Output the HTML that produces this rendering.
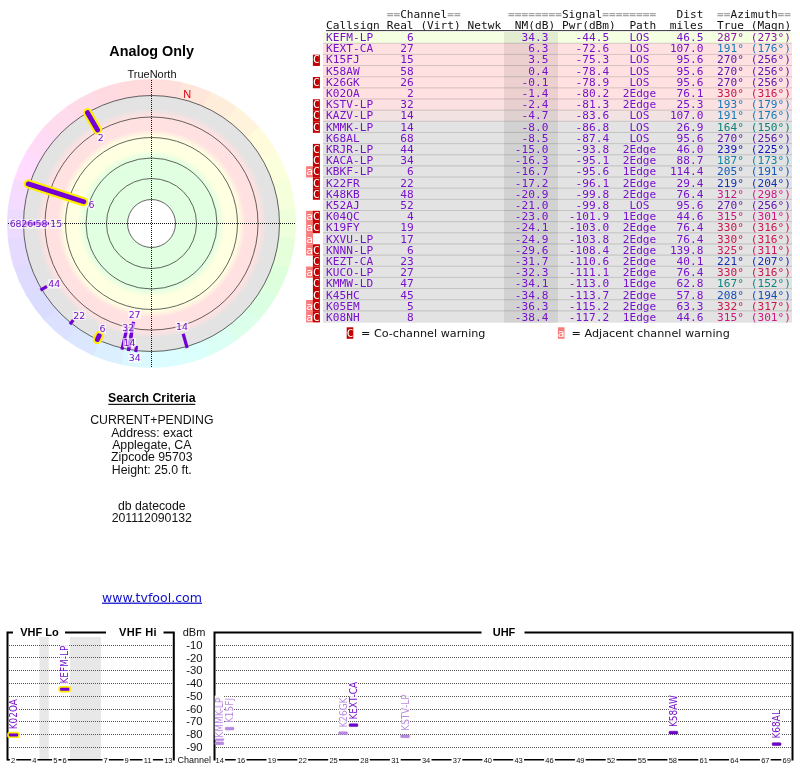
<!DOCTYPE html>
<html lang="en"><head><meta charset="utf-8"><title>TV Fool - Analog Only</title>
<style>
html,body{margin:0;padding:0;background:#fff;}
body{width:800px;height:768px;overflow:hidden;}
svg{display:block;will-change:transform;}
.ar{font-family:"Liberation Sans",Arial,sans-serif;}
.dv{font-family:"DejaVu Sans",Verdana,"Liberation Sans",sans-serif;}
.mo{font-family:"DejaVu Sans Mono","Liberation Mono",monospace;font-size:11.15px;letter-spacing:0.03px;}
</style></head><body>
<svg width="800" height="768" viewBox="0 0 800 768">
<rect width="800" height="768" fill="#fff"/>

<defs><radialGradient id="bands" gradientUnits="userSpaceOnUse" cx="151.5" cy="223.5" r="128.0">
<stop offset="0.0000" stop-color="#fff"/>
<stop offset="0.1867" stop-color="#fff"/>
<stop offset="0.1875" stop-color="#e1ffe1"/>
<stop offset="0.5156" stop-color="#e1ffe1"/>
<stop offset="0.5742" stop-color="#ffffe1"/>
<stop offset="0.6797" stop-color="#ffffe1"/>
<stop offset="0.7344" stop-color="#ffe1e1"/>
<stop offset="0.8438" stop-color="#ffe1e1"/>
<stop offset="0.8984" stop-color="#e3e3e3"/>
<stop offset="1.0000" stop-color="#e3e3e3"/>
</radialGradient></defs>

<g>
<path d="M151.50 223.50 L151.50 79.00 A144.50 144.50 0 0 1 182.28 82.32 Z" fill="#ffdfdb"/>
<path d="M151.50 223.50 L181.54 82.16 A144.50 144.50 0 0 1 210.96 91.80 Z" fill="#ffe6db"/>
<path d="M151.50 223.50 L210.27 91.49 A144.50 144.50 0 0 1 237.05 107.04 Z" fill="#ffeddb"/>
<path d="M151.50 223.50 L236.43 106.60 A144.50 144.50 0 0 1 259.39 127.37 Z" fill="#fff4db"/>
<path d="M151.50 223.50 L258.88 126.81 A144.50 144.50 0 0 1 277.02 151.91 Z" fill="#fffbdb"/>
<path d="M151.50 223.50 L276.64 151.25 A144.50 144.50 0 0 1 289.16 179.57 Z" fill="#fcffdb"/>
<path d="M151.50 223.50 L288.93 178.85 A144.50 144.50 0 0 1 295.29 209.15 Z" fill="#f5ffdb"/>
<path d="M151.50 223.50 L295.21 208.40 A144.50 144.50 0 0 1 295.13 239.36 Z" fill="#eeffdb"/>
<path d="M151.50 223.50 L295.21 238.60 A144.50 144.50 0 0 1 288.69 268.87 Z" fill="#e6ffdb"/>
<path d="M151.50 223.50 L288.93 268.15 A144.50 144.50 0 0 1 276.26 296.40 Z" fill="#ddffdb"/>
<path d="M151.50 223.50 L276.64 295.75 A144.50 144.50 0 0 1 258.38 320.75 Z" fill="#dbffe3"/>
<path d="M151.50 223.50 L258.88 320.19 A144.50 144.50 0 0 1 235.82 340.85 Z" fill="#dbffeb"/>
<path d="M151.50 223.50 L236.43 340.40 A144.50 144.50 0 0 1 209.58 355.81 Z" fill="#dbfff4"/>
<path d="M151.50 223.50 L210.27 355.51 A144.50 144.50 0 0 1 180.80 365.00 Z" fill="#dbfffb"/>
<path d="M151.50 223.50 L181.54 364.84 A144.50 144.50 0 0 1 150.74 368.00 Z" fill="#dbfdff"/>
<path d="M151.50 223.50 L151.50 368.00 A144.50 144.50 0 0 1 120.72 364.68 Z" fill="#dbf8ff"/>
<path d="M151.50 223.50 L121.46 364.84 A144.50 144.50 0 0 1 92.04 355.20 Z" fill="#dbefff"/>
<path d="M151.50 223.50 L92.73 355.51 A144.50 144.50 0 0 1 65.95 339.96 Z" fill="#dbe7ff"/>
<path d="M151.50 223.50 L66.57 340.40 A144.50 144.50 0 0 1 43.61 319.63 Z" fill="#dbe1ff"/>
<path d="M151.50 223.50 L44.12 320.19 A144.50 144.50 0 0 1 25.98 295.09 Z" fill="#dbddff"/>
<path d="M151.50 223.50 L26.36 295.75 A144.50 144.50 0 0 1 13.84 267.43 Z" fill="#dfdbff"/>
<path d="M151.50 223.50 L14.07 268.15 A144.50 144.50 0 0 1 7.71 237.85 Z" fill="#e6dbff"/>
<path d="M151.50 223.50 L7.79 238.60 A144.50 144.50 0 0 1 7.87 207.64 Z" fill="#eddbff"/>
<path d="M151.50 223.50 L7.79 208.40 A144.50 144.50 0 0 1 14.31 178.13 Z" fill="#f5dbff"/>
<path d="M151.50 223.50 L14.07 178.85 A144.50 144.50 0 0 1 26.74 150.60 Z" fill="#fedbff"/>
<path d="M151.50 223.50 L26.36 151.25 A144.50 144.50 0 0 1 44.62 126.25 Z" fill="#ffdbf6"/>
<path d="M151.50 223.50 L44.12 126.81 A144.50 144.50 0 0 1 67.18 106.15 Z" fill="#ffdbee"/>
<path d="M151.50 223.50 L66.57 106.60 A144.50 144.50 0 0 1 93.42 91.19 Z" fill="#ffdbe7"/>
<path d="M151.50 223.50 L92.73 91.49 A144.50 144.50 0 0 1 122.20 82.00 Z" fill="#ffdbe1"/>
<path d="M151.50 223.50 L121.46 82.16 A144.50 144.50 0 0 1 152.26 79.00 Z" fill="#ffdbdd"/>
</g>

<circle cx="151.5" cy="223.5" r="128.0" fill="url(#bands)"/>

<circle cx="151.5" cy="223.5" r="24" fill="none" stroke="#333" stroke-width="0.75"/>
<circle cx="151.5" cy="223.5" r="45" fill="none" stroke="#333" stroke-width="0.75"/>
<circle cx="151.5" cy="223.5" r="65.5" fill="none" stroke="#333" stroke-width="0.75"/>
<circle cx="151.5" cy="223.5" r="86" fill="none" stroke="#333" stroke-width="0.75"/>
<circle cx="151.5" cy="223.5" r="106.5" fill="none" stroke="#333" stroke-width="0.75"/>
<circle cx="151.5" cy="223.5" r="128" fill="none" stroke="#333" stroke-width="0.75"/>


<path d="M8 223.5 H296 M151.5 80 V368" stroke="#111" stroke-width="1" stroke-dasharray="1 1" fill="none"/>

<g fill="none">
<path d="M28.20 183.91 L83.82 201.77" stroke="#ffee00" stroke-width="9.2" stroke-linecap="round"/>
<path d="M28.20 183.91 L83.82 201.77" stroke="#7200d6" stroke-width="4.9" stroke-linecap="round"/>
<path d="M128.35 350.91 L133.62 321.88" stroke="#7200d6" stroke-width="3.2"/>
<path d="M22.00 223.50 L48.61 223.50" stroke="#7200d6" stroke-width="3.2"/>
<path d="M22.00 223.50 L45.41 223.50" stroke="#7200d6" stroke-width="3.2"/>
<path d="M22.00 223.50 L44.90 223.50" stroke="#7200d6" stroke-width="3.2"/>
<path d="M87.50 112.65 L97.53 130.02" stroke="#ffee00" stroke-width="9.2" stroke-linecap="round"/>
<path d="M87.50 112.65 L97.53 130.02" stroke="#7200d6" stroke-width="4.9" stroke-linecap="round"/>
<path d="M121.93 349.58 L126.61 329.60" stroke="#7200d6" stroke-width="3.2"/>
<path d="M128.35 350.91 L131.59 333.06" stroke="#7200d6" stroke-width="3.2"/>
<path d="M187.20 347.98 L183.13 333.81" stroke="#7200d6" stroke-width="3.2"/>
<path d="M22.00 223.50 L36.22 223.50" stroke="#7200d6" stroke-width="3.2"/>
<path d="M40.50 290.20 L46.94 286.33" stroke="#7200d6" stroke-width="3.2"/>
<path d="M135.72 352.03 L136.47 345.91" stroke="#7200d6" stroke-width="3.2"/>
<path d="M97.40 339.51 L99.20 335.65" stroke="#ffee00" stroke-width="9.2" stroke-linecap="round"/>
<path d="M97.40 339.51 L99.20 335.65" stroke="#7200d6" stroke-width="4.9" stroke-linecap="round"/>
<path d="M70.00 324.14 L73.30 320.07" stroke="#7200d6" stroke-width="3.2"/>
</g>

<g class="dv" font-size="9.4" text-anchor="middle" fill="#7711cc">
<rect x="97.4" y="132.8" width="6.8" height="9.4" fill="#fff" fill-opacity="0.62"/>
<rect x="88.0" y="200.2" width="6.8" height="9.4" fill="#fff" fill-opacity="0.62"/>
<rect x="49.7" y="219.3" width="13.0" height="9.4" fill="#fff" fill-opacity="0.62"/>
<rect x="35.0" y="219.3" width="13.0" height="9.4" fill="#fff" fill-opacity="0.62"/>
<rect x="20.7" y="219.3" width="13.0" height="9.4" fill="#fff" fill-opacity="0.62"/>
<rect x="9.1" y="219.3" width="13.0" height="9.4" fill="#fff" fill-opacity="0.62"/>
<rect x="47.8" y="279.1" width="13.0" height="9.4" fill="#fff" fill-opacity="0.62"/>
<rect x="72.8" y="310.7" width="13.0" height="9.4" fill="#fff" fill-opacity="0.62"/>
<rect x="99.1" y="324.1" width="6.8" height="9.4" fill="#fff" fill-opacity="0.62"/>
<rect x="128.1" y="309.7" width="13.0" height="9.4" fill="#fff" fill-opacity="0.62"/>
<rect x="121.7" y="323.3" width="13.0" height="9.4" fill="#fff" fill-opacity="0.62"/>
<rect x="123.0" y="337.9" width="13.0" height="9.4" fill="#fff" fill-opacity="0.62"/>
<rect x="128.3" y="353.3" width="13.0" height="9.4" fill="#fff" fill-opacity="0.62"/>
<rect x="175.5" y="321.7" width="13.0" height="9.4" fill="#fff" fill-opacity="0.62"/>
<text x="100.8" y="140.9">2</text>
<text x="91.4" y="208.3">6</text>
<text x="56.2" y="227.4">15</text>
<text x="41.5" y="227.4">58</text>
<text x="27.2" y="227.4">26</text>
<text x="15.6" y="227.4">68</text>
<text x="54.3" y="287.2">44</text>
<text x="79.3" y="318.8">22</text>
<text x="102.5" y="332.2">6</text>
<text x="134.6" y="317.8">27</text>
<text x="128.2" y="331.4">32</text>
<text x="129.5" y="346.1">14</text>
<text x="134.8" y="361.4">34</text>
<text x="182" y="329.8">14</text>
</g>

<text class="ar" x="151.7" y="55.8" font-size="14.4" font-weight="bold" text-anchor="middle" fill="#000">Analog Only</text>

<text class="ar" x="152" y="77.7" font-size="11" text-anchor="middle" fill="#111">TrueNorth</text>

<text class="ar" x="187.3" y="97.5" font-size="11" text-anchor="middle" fill="#dd0011">N</text>

<g class="ar" text-anchor="middle" fill="#111" font-size="12.3">
<text x="151.8" y="402" font-weight="bold" fill="#000">Search Criteria</text><rect x="108.3" y="403.8" width="87" height="1.1" fill="#000"/>
<text x="151.8" y="423.8">CURRENT+PENDING</text>
<text x="151.8" y="436.9">Address: exact</text>
<text x="151.8" y="448.8">Applegate, CA</text>
<text x="151.8" y="460.7">Zipcode 95703</text>
<text x="151.8" y="473.6">Height: 25.0 ft.</text>
<text x="151.8" y="509.7">db datecode</text>
<text x="151.8" y="522.2">201112090132</text>
</g>

<text class="dv" x="152" y="601.6" font-size="12.55" text-anchor="middle" fill="#1010cc" text-decoration="underline">www.tvfool.com</text>

<g class="mo" transform="scale(1 0.865)">
<text y="20.58" fill="#a4a4a4" font-weight="bold" xml:space="preserve"><tspan x="386.68">==</tspan><tspan fill="#111" font-weight="normal">Channel</tspan>==</text>
<text y="20.58" fill="#a4a4a4" font-weight="bold" xml:space="preserve"><tspan x="508.03">========</tspan><tspan fill="#111" font-weight="normal">Signal</tspan>========</text>
<text y="20.58" fill="#111" x="676.58">Dist</text>
<text y="20.58" fill="#a4a4a4" font-weight="bold" xml:space="preserve"><tspan x="717.04">==</tspan><tspan fill="#111" font-weight="normal">Azimuth</tspan>==</text>
<text y="33.53" fill="#111" x="326.00">Callsign</text>
<text y="33.53" fill="#111" x="386.68">Real</text>
<text y="33.53" fill="#111" x="420.39">(Virt)</text>
<text y="33.53" fill="#111" x="467.58">Netwk</text>
<text y="33.53" fill="#111" x="514.78">NM(dB)</text>
<text y="33.53" fill="#111" x="561.97">Pwr(dBm)</text>
<text y="33.53" fill="#111" x="629.39">Path</text>
<text y="33.53" fill="#111" x="669.84">miles</text>
<text y="33.53" fill="#111" x="717.04">True</text>
<text y="33.53" fill="#111" x="750.75">(Magn)</text>
</g>

<rect x="326" y="30.1" width="464.5" height="1" fill="#333"/>

<g>
<rect x="323" y="32.10" width="469" height="11.20" fill="#f5ffe1"/>
<rect x="323" y="43.25" width="469" height="11.20" fill="#ffe1e1"/>
<rect x="323" y="54.40" width="469" height="11.20" fill="#ffe1e1"/>
<rect x="323" y="65.55" width="469" height="11.20" fill="#ffe1e1"/>
<rect x="323" y="76.70" width="469" height="11.20" fill="#ffe1e1"/>
<rect x="323" y="87.85" width="469" height="11.20" fill="#ffe1e1"/>
<rect x="323" y="99.00" width="469" height="11.20" fill="#fbe1e1"/>
<rect x="323" y="110.15" width="469" height="11.20" fill="#f2e2e2"/>
<rect x="323" y="121.30" width="469" height="11.20" fill="#e4e3e3"/>
<rect x="323" y="132.45" width="469" height="11.20" fill="#e3e3e3"/>
<rect x="323" y="143.60" width="469" height="11.20" fill="#e3e3e3"/>
<rect x="323" y="154.75" width="469" height="11.20" fill="#e3e3e3"/>
<rect x="323" y="165.90" width="469" height="11.20" fill="#e3e3e3"/>
<rect x="323" y="177.05" width="469" height="11.20" fill="#e3e3e3"/>
<rect x="323" y="188.20" width="469" height="11.20" fill="#e3e3e3"/>
<rect x="323" y="199.35" width="469" height="11.20" fill="#e3e3e3"/>
<rect x="323" y="210.50" width="469" height="11.20" fill="#e3e3e3"/>
<rect x="323" y="221.65" width="469" height="11.20" fill="#e3e3e3"/>
<rect x="323" y="232.80" width="469" height="11.20" fill="#e3e3e3"/>
<rect x="323" y="243.95" width="469" height="11.20" fill="#e3e3e3"/>
<rect x="323" y="255.10" width="469" height="11.20" fill="#e3e3e3"/>
<rect x="323" y="266.25" width="469" height="11.20" fill="#e3e3e3"/>
<rect x="323" y="277.40" width="469" height="11.20" fill="#e3e3e3"/>
<rect x="323" y="288.55" width="469" height="11.20" fill="#e3e3e3"/>
<rect x="323" y="299.70" width="469" height="11.20" fill="#e3e3e3"/>
<rect x="323" y="310.85" width="469" height="11.85" fill="#e3e3e3"/>
<rect x="504" y="32.10" width="54" height="290.60" fill="#000" fill-opacity="0.075"/>
<rect x="323" y="42.75" width="469" height="1" fill="#000" fill-opacity="0.16"/>
<rect x="323" y="53.90" width="469" height="1" fill="#000" fill-opacity="0.16"/>
<rect x="323" y="65.05" width="469" height="1" fill="#000" fill-opacity="0.16"/>
<rect x="323" y="76.20" width="469" height="1" fill="#000" fill-opacity="0.16"/>
<rect x="323" y="87.35" width="469" height="1" fill="#000" fill-opacity="0.16"/>
<rect x="323" y="98.50" width="469" height="1" fill="#000" fill-opacity="0.16"/>
<rect x="323" y="109.65" width="469" height="1" fill="#000" fill-opacity="0.16"/>
<rect x="323" y="120.80" width="469" height="1" fill="#000" fill-opacity="0.16"/>
<rect x="323" y="131.95" width="469" height="1" fill="#000" fill-opacity="0.16"/>
<rect x="323" y="143.10" width="469" height="1" fill="#000" fill-opacity="0.16"/>
<rect x="323" y="154.25" width="469" height="1" fill="#000" fill-opacity="0.16"/>
<rect x="323" y="165.40" width="469" height="1" fill="#000" fill-opacity="0.16"/>
<rect x="323" y="176.55" width="469" height="1" fill="#000" fill-opacity="0.16"/>
<rect x="323" y="187.70" width="469" height="1" fill="#000" fill-opacity="0.16"/>
<rect x="323" y="198.85" width="469" height="1" fill="#000" fill-opacity="0.16"/>
<rect x="323" y="210.00" width="469" height="1" fill="#000" fill-opacity="0.16"/>
<rect x="323" y="221.15" width="469" height="1" fill="#000" fill-opacity="0.16"/>
<rect x="323" y="232.30" width="469" height="1" fill="#000" fill-opacity="0.16"/>
<rect x="323" y="243.45" width="469" height="1" fill="#000" fill-opacity="0.16"/>
<rect x="323" y="254.60" width="469" height="1" fill="#000" fill-opacity="0.16"/>
<rect x="323" y="265.75" width="469" height="1" fill="#000" fill-opacity="0.16"/>
<rect x="323" y="276.90" width="469" height="1" fill="#000" fill-opacity="0.16"/>
<rect x="323" y="288.05" width="469" height="1" fill="#000" fill-opacity="0.16"/>
<rect x="323" y="299.20" width="469" height="1" fill="#000" fill-opacity="0.16"/>
<rect x="323" y="310.35" width="469" height="1" fill="#000" fill-opacity="0.16"/>
</g>

<g class="mo" fill="#7711cc" transform="scale(1 0.865)">
<text y="47.34"><tspan x="326.00">KEFM-LP</tspan></text>
<text y="47.34" text-anchor="end" x="413.65">6</text>
<text y="47.34" text-anchor="end" x="548.49">34.3</text>
<text y="47.34" text-anchor="end" x="609.16">-44.5</text>
<text y="47.34" text-anchor="middle" x="639.50">LOS</text>
<text y="47.34" text-anchor="end" x="703.55">46.5</text>
<text y="47.34" fill="#8f13ae" xml:space="preserve" x="717.04">287° (273°)</text>
<text y="60.29"><tspan x="326.00">KEXT-CA</tspan></text>
<text y="60.29" text-anchor="end" x="413.65">27</text>
<text y="60.29" text-anchor="end" x="548.49">6.3</text>
<text y="60.29" text-anchor="end" x="609.16">-72.6</text>
<text y="60.29" text-anchor="middle" x="639.50">LOS</text>
<text y="60.29" text-anchor="end" x="703.55">107.0</text>
<text y="60.29" fill="#147cb8" xml:space="preserve" x="717.04">191° (176°)</text>
<text y="73.24"><tspan x="326.00">K15FJ</tspan></text>
<text y="73.24" text-anchor="end" x="413.65">15</text>
<text y="73.24" text-anchor="end" x="548.49">3.5</text>
<text y="73.24" text-anchor="end" x="609.16">-75.3</text>
<text y="73.24" text-anchor="middle" x="639.50">LOS</text>
<text y="73.24" text-anchor="end" x="703.55">95.6</text>
<text y="73.24" fill="#5e13ae" xml:space="preserve" x="717.04">270° (256°)</text>
<text y="86.18"><tspan x="326.00">K58AW</tspan></text>
<text y="86.18" text-anchor="end" x="413.65">58</text>
<text y="86.18" text-anchor="end" x="548.49">0.4</text>
<text y="86.18" text-anchor="end" x="609.16">-78.4</text>
<text y="86.18" text-anchor="middle" x="639.50">LOS</text>
<text y="86.18" text-anchor="end" x="703.55">95.6</text>
<text y="86.18" fill="#5e13ae" xml:space="preserve" x="717.04">270° (256°)</text>
<text y="99.13"><tspan x="326.00">K26GK</tspan></text>
<text y="99.13" text-anchor="end" x="413.65">26</text>
<text y="99.13" text-anchor="end" x="548.49">-0.1</text>
<text y="99.13" text-anchor="end" x="609.16">-78.9</text>
<text y="99.13" text-anchor="middle" x="639.50">LOS</text>
<text y="99.13" text-anchor="end" x="703.55">95.6</text>
<text y="99.13" fill="#5e13ae" xml:space="preserve" x="717.04">270° (256°)</text>
<text y="112.08"><tspan x="326.00">K02OA</tspan></text>
<text y="112.08" text-anchor="end" x="413.65">2</text>
<text y="112.08" text-anchor="end" x="548.49">-1.4</text>
<text y="112.08" text-anchor="end" x="609.16">-80.2</text>
<text y="112.08" text-anchor="middle" x="639.50">2Edge</text>
<text y="112.08" text-anchor="end" x="703.55">76.1</text>
<text y="112.08" fill="#ca164f" xml:space="preserve" x="717.04">330° (316°)</text>
<text y="125.03"><tspan x="326.00">KSTV-LP</tspan></text>
<text y="125.03" text-anchor="end" x="413.65">32</text>
<text y="125.03" text-anchor="end" x="548.49">-2.4</text>
<text y="125.03" text-anchor="end" x="609.16">-81.3</text>
<text y="125.03" text-anchor="middle" x="639.50">2Edge</text>
<text y="125.03" text-anchor="end" x="703.55">25.3</text>
<text y="125.03" fill="#1579bc" xml:space="preserve" x="717.04">193° (179°)</text>
<text y="137.98"><tspan x="326.00">KAZV-LP</tspan></text>
<text y="137.98" text-anchor="end" x="413.65">14</text>
<text y="137.98" text-anchor="end" x="548.49">-4.7</text>
<text y="137.98" text-anchor="end" x="609.16">-83.6</text>
<text y="137.98" text-anchor="middle" x="639.50">LOS</text>
<text y="137.98" text-anchor="end" x="703.55">107.0</text>
<text y="137.98" fill="#147cb8" xml:space="preserve" x="717.04">191° (176°)</text>
<text y="150.92"><tspan x="326.00">KMMK-LP</tspan></text>
<text y="150.92" text-anchor="end" x="413.65">14</text>
<text y="150.92" text-anchor="end" x="548.49">-8.0</text>
<text y="150.92" text-anchor="end" x="609.16">-86.8</text>
<text y="150.92" text-anchor="middle" x="639.50">LOS</text>
<text y="150.92" text-anchor="end" x="703.55">26.9</text>
<text y="150.92" fill="#0e8179" xml:space="preserve" x="717.04">164° (150°)</text>
<text y="163.87"><tspan x="326.00">K68AL</tspan></text>
<text y="163.87" text-anchor="end" x="413.65">68</text>
<text y="163.87" text-anchor="end" x="548.49">-8.5</text>
<text y="163.87" text-anchor="end" x="609.16">-87.4</text>
<text y="163.87" text-anchor="middle" x="639.50">LOS</text>
<text y="163.87" text-anchor="end" x="703.55">95.6</text>
<text y="163.87" fill="#5e13ae" xml:space="preserve" x="717.04">270° (256°)</text>
<text y="176.82"><tspan x="326.00">KRJR-LP</tspan></text>
<text y="176.82" text-anchor="end" x="413.65">44</text>
<text y="176.82" text-anchor="end" x="548.49">-15.0</text>
<text y="176.82" text-anchor="end" x="609.16">-93.8</text>
<text y="176.82" text-anchor="middle" x="639.50">2Edge</text>
<text y="176.82" text-anchor="end" x="703.55">46.0</text>
<text y="176.82" fill="#1515bc" xml:space="preserve" x="717.04">239° (225°)</text>
<text y="189.77"><tspan x="326.00">KACA-LP</tspan></text>
<text y="189.77" text-anchor="end" x="413.65">34</text>
<text y="189.77" text-anchor="end" x="548.49">-16.3</text>
<text y="189.77" text-anchor="end" x="609.16">-95.1</text>
<text y="189.77" text-anchor="middle" x="639.50">2Edge</text>
<text y="189.77" text-anchor="end" x="703.55">88.7</text>
<text y="189.77" fill="#1285a5" xml:space="preserve" x="717.04">187° (173°)</text>
<text y="202.72"><tspan x="326.00">KBKF-LP</tspan></text>
<text y="202.72" text-anchor="end" x="413.65">6</text>
<text y="202.72" text-anchor="end" x="548.49">-16.7</text>
<text y="202.72" text-anchor="end" x="609.16">-95.6</text>
<text y="202.72" text-anchor="middle" x="639.50">1Edge</text>
<text y="202.72" text-anchor="end" x="703.55">114.4</text>
<text y="202.72" fill="#1558bc" xml:space="preserve" x="717.04">205° (191°)</text>
<text y="215.66"><tspan x="326.00">K22FR</tspan></text>
<text y="215.66" text-anchor="end" x="413.65">22</text>
<text y="215.66" text-anchor="end" x="548.49">-17.2</text>
<text y="215.66" text-anchor="end" x="609.16">-96.1</text>
<text y="215.66" text-anchor="middle" x="639.50">2Edge</text>
<text y="215.66" text-anchor="end" x="703.55">29.4</text>
<text y="215.66" fill="#1431b3" xml:space="preserve" x="717.04">219° (204°)</text>
<text y="228.61"><tspan x="326.00">K48KB</tspan></text>
<text y="228.61" text-anchor="end" x="413.65">48</text>
<text y="228.61" text-anchor="end" x="548.49">-20.9</text>
<text y="228.61" text-anchor="end" x="609.16">-99.8</text>
<text y="228.61" text-anchor="middle" x="639.50">2Edge</text>
<text y="228.61" text-anchor="end" x="703.55">76.4</text>
<text y="228.61" fill="#cf1788" xml:space="preserve" x="717.04">312° (298°)</text>
<text y="241.56"><tspan x="326.00">K52AJ</tspan></text>
<text y="241.56" text-anchor="end" x="413.65">52</text>
<text y="241.56" text-anchor="end" x="548.49">-21.0</text>
<text y="241.56" text-anchor="end" x="609.16">-99.8</text>
<text y="241.56" text-anchor="middle" x="639.50">LOS</text>
<text y="241.56" text-anchor="end" x="703.55">95.6</text>
<text y="241.56" fill="#5e13ae" xml:space="preserve" x="717.04">270° (256°)</text>
<text y="254.51"><tspan x="326.00">K04QC</tspan></text>
<text y="254.51" text-anchor="end" x="413.65">4</text>
<text y="254.51" text-anchor="end" x="548.49">-23.0</text>
<text y="254.51" text-anchor="end" x="609.16">-101.9</text>
<text y="254.51" text-anchor="middle" x="639.50">1Edge</text>
<text y="254.51" text-anchor="end" x="703.55">44.6</text>
<text y="254.51" fill="#ce177f" xml:space="preserve" x="717.04">315° (301°)</text>
<text y="267.46"><tspan x="326.00">K19FY</tspan></text>
<text y="267.46" text-anchor="end" x="413.65">19</text>
<text y="267.46" text-anchor="end" x="548.49">-24.1</text>
<text y="267.46" text-anchor="end" x="609.16">-103.0</text>
<text y="267.46" text-anchor="middle" x="639.50">2Edge</text>
<text y="267.46" text-anchor="end" x="703.55">76.4</text>
<text y="267.46" fill="#ca164f" xml:space="preserve" x="717.04">330° (316°)</text>
<text y="280.40"><tspan x="326.00">KXVU-LP</tspan></text>
<text y="280.40" text-anchor="end" x="413.65">17</text>
<text y="280.40" text-anchor="end" x="548.49">-24.9</text>
<text y="280.40" text-anchor="end" x="609.16">-103.8</text>
<text y="280.40" text-anchor="middle" x="639.50">2Edge</text>
<text y="280.40" text-anchor="end" x="703.55">76.4</text>
<text y="280.40" fill="#ca164f" xml:space="preserve" x="717.04">330° (316°)</text>
<text y="293.35"><tspan x="326.00">KNNN-LP</tspan></text>
<text y="293.35" text-anchor="end" x="413.65">6</text>
<text y="293.35" text-anchor="end" x="548.49">-29.6</text>
<text y="293.35" text-anchor="end" x="609.16">-108.4</text>
<text y="293.35" text-anchor="middle" x="639.50">2Edge</text>
<text y="293.35" text-anchor="end" x="703.55">139.8</text>
<text y="293.35" fill="#cb175f" xml:space="preserve" x="717.04">325° (311°)</text>
<text y="306.30"><tspan x="326.00">KEZT-CA</tspan></text>
<text y="306.30" text-anchor="end" x="413.65">23</text>
<text y="306.30" text-anchor="end" x="548.49">-31.7</text>
<text y="306.30" text-anchor="end" x="609.16">-110.6</text>
<text y="306.30" text-anchor="middle" x="639.50">2Edge</text>
<text y="306.30" text-anchor="end" x="703.55">40.1</text>
<text y="306.30" fill="#142eb4" xml:space="preserve" x="717.04">221° (207°)</text>
<text y="319.25"><tspan x="326.00">KUCO-LP</tspan></text>
<text y="319.25" text-anchor="end" x="413.65">27</text>
<text y="319.25" text-anchor="end" x="548.49">-32.3</text>
<text y="319.25" text-anchor="end" x="609.16">-111.1</text>
<text y="319.25" text-anchor="middle" x="639.50">2Edge</text>
<text y="319.25" text-anchor="end" x="703.55">76.4</text>
<text y="319.25" fill="#ca164f" xml:space="preserve" x="717.04">330° (316°)</text>
<text y="332.20"><tspan x="326.00">KMMW-LD</tspan></text>
<text y="332.20" text-anchor="end" x="413.65">47</text>
<text y="332.20" text-anchor="end" x="548.49">-34.1</text>
<text y="332.20" text-anchor="end" x="609.16">-113.0</text>
<text y="332.20" text-anchor="middle" x="639.50">1Edge</text>
<text y="332.20" text-anchor="end" x="703.55">62.8</text>
<text y="332.20" fill="#0f8582" xml:space="preserve" x="717.04">167° (152°)</text>
<text y="345.14"><tspan x="326.00">K45HC</tspan></text>
<text y="345.14" text-anchor="end" x="413.65">45</text>
<text y="345.14" text-anchor="end" x="548.49">-34.8</text>
<text y="345.14" text-anchor="end" x="609.16">-113.7</text>
<text y="345.14" text-anchor="middle" x="639.50">2Edge</text>
<text y="345.14" text-anchor="end" x="703.55">57.8</text>
<text y="345.14" fill="#154fba" xml:space="preserve" x="717.04">208° (194°)</text>
<text y="358.09"><tspan x="326.00">K05EM</tspan></text>
<text y="358.09" text-anchor="end" x="413.65">5</text>
<text y="358.09" text-anchor="end" x="548.49">-36.3</text>
<text y="358.09" text-anchor="end" x="609.16">-115.2</text>
<text y="358.09" text-anchor="middle" x="639.50">2Edge</text>
<text y="358.09" text-anchor="end" x="703.55">63.3</text>
<text y="358.09" fill="#ca164a" xml:space="preserve" x="717.04">332° (317°)</text>
<text y="371.04"><tspan x="326.00">K08NH</tspan></text>
<text y="371.04" text-anchor="end" x="413.65">8</text>
<text y="371.04" text-anchor="end" x="548.49">-38.4</text>
<text y="371.04" text-anchor="end" x="609.16">-117.2</text>
<text y="371.04" text-anchor="middle" x="639.50">1Edge</text>
<text y="371.04" text-anchor="end" x="703.55">44.6</text>
<text y="371.04" fill="#ce177f" xml:space="preserve" x="717.04">315° (301°)</text>
</g>

<g>
<rect x="312.9" y="54.70" width="7" height="11.25" fill="#c40000"/>
<rect x="312.9" y="77.00" width="7" height="11.25" fill="#c40000"/>
<rect x="312.9" y="99.30" width="7" height="11.25" fill="#c40000"/>
<rect x="312.9" y="110.45" width="7" height="11.25" fill="#c40000"/>
<rect x="312.9" y="121.60" width="7" height="11.25" fill="#c40000"/>
<rect x="312.9" y="143.90" width="7" height="11.25" fill="#c40000"/>
<rect x="312.9" y="155.05" width="7" height="11.25" fill="#c40000"/>
<rect x="306.1" y="166.20" width="6.9" height="11.25" fill="#f97c7c"/>
<rect x="312.9" y="166.20" width="7" height="11.25" fill="#c40000"/>
<rect x="312.9" y="177.35" width="7" height="11.25" fill="#c40000"/>
<rect x="312.9" y="188.50" width="7" height="11.25" fill="#c40000"/>
<rect x="306.1" y="210.80" width="6.9" height="11.25" fill="#f97c7c"/>
<rect x="312.9" y="210.80" width="7" height="11.25" fill="#c40000"/>
<rect x="306.1" y="221.95" width="6.9" height="11.25" fill="#f97c7c"/>
<rect x="312.9" y="221.95" width="7" height="11.25" fill="#c40000"/>
<rect x="306.1" y="233.10" width="6.9" height="11.25" fill="#f97c7c"/>
<rect x="306.1" y="244.25" width="6.9" height="11.25" fill="#f97c7c"/>
<rect x="312.9" y="244.25" width="7" height="11.25" fill="#c40000"/>
<rect x="312.9" y="255.40" width="7" height="11.25" fill="#c40000"/>
<rect x="306.1" y="266.55" width="6.9" height="11.25" fill="#f97c7c"/>
<rect x="312.9" y="266.55" width="7" height="11.25" fill="#c40000"/>
<rect x="312.9" y="277.70" width="7" height="11.25" fill="#c40000"/>
<rect x="312.9" y="288.85" width="7" height="11.25" fill="#c40000"/>
<rect x="306.1" y="300.00" width="6.9" height="11.25" fill="#f97c7c"/>
<rect x="312.9" y="300.00" width="7" height="11.25" fill="#c40000"/>
<rect x="306.1" y="311.15" width="6.9" height="11.25" fill="#f97c7c"/>
<rect x="312.9" y="311.15" width="7" height="11.25" fill="#c40000"/>
<rect x="346.7" y="327.3" width="6.6" height="11.5" fill="#c40000"/>
<rect x="557.9" y="327.3" width="6.6" height="11.5" fill="#f97c7c"/>
</g>
<g class="mo" fill="#fff" text-anchor="middle" transform="scale(1 0.865)">
<text x="316.5" y="73.24">C</text>
<text x="316.5" y="99.13">C</text>
<text x="316.5" y="125.03">C</text>
<text x="316.5" y="137.98">C</text>
<text x="316.5" y="150.92">C</text>
<text x="316.5" y="176.82">C</text>
<text x="316.5" y="189.77">C</text>
<text x="309.6" y="202.72">a</text>
<text x="316.5" y="202.72">C</text>
<text x="316.5" y="215.66">C</text>
<text x="316.5" y="228.61">C</text>
<text x="309.6" y="254.51">a</text>
<text x="316.5" y="254.51">C</text>
<text x="309.6" y="267.46">a</text>
<text x="316.5" y="267.46">C</text>
<text x="309.6" y="280.40">a</text>
<text x="309.6" y="293.35">a</text>
<text x="316.5" y="293.35">C</text>
<text x="316.5" y="306.30">C</text>
<text x="309.6" y="319.25">a</text>
<text x="316.5" y="319.25">C</text>
<text x="316.5" y="332.20">C</text>
<text x="316.5" y="345.14">C</text>
<text x="309.6" y="358.09">a</text>
<text x="316.5" y="358.09">C</text>
<text x="309.6" y="371.04">a</text>
<text x="316.5" y="371.04">C</text>
<text x="350" y="389.25">C</text><text x="561.2" y="389.25">a</text>
</g>

<text class="dv" x="361" y="336.6" font-size="11.2" fill="#111">= Co-channel warning</text>

<text class="dv" x="571.6" y="336.6" font-size="11.2" fill="#111">= Adjacent channel warning</text>

<rect x="39.4" y="637" width="9.4" height="123.0" fill="#e8e8e8"/><rect x="70" y="637" width="31" height="123.0" fill="#e8e8e8"/>

<g stroke="#555" stroke-width="1" stroke-dasharray="1 1" fill="none">
<path d="M9 645.5 H173 M216 645.5 H792"/>
<path d="M9 657.5 H173 M216 657.5 H792"/>
<path d="M9 670.5 H173 M216 670.5 H792"/>
<path d="M9 683.5 H173 M216 683.5 H792"/>
<path d="M9 696.5 H173 M216 696.5 H792"/>
<path d="M9 709.5 H173 M216 709.5 H792"/>
<path d="M9 721.5 H173 M216 721.5 H792"/>
<path d="M9 734.5 H173 M216 734.5 H792"/>
<path d="M9 747.5 H173 M216 747.5 H792"/>
</g>

<g stroke="#000" stroke-width="2" fill="none">
<path d="M13 632.5 H7.5 V760.5"/><path d="M65 632.5 H106"/><path d="M163.5 632.5 H173.8 V760.5"/>
<path d="M214.5 760.5 V632.5 H481.5"/><path d="M524.5 632.5 H792.5 V760.5"/>
</g>

<g class="ar" font-weight="bold" font-size="11" fill="#000" text-anchor="middle">
<text x="39.5" y="635.8">VHF Lo</text><text x="138" y="635.8" letter-spacing="0.3">VHF Hi</text><text x="504" y="635.8">UHF</text></g>

<g class="ar" font-size="11.3" fill="#111">
<text x="194" y="636" text-anchor="middle" font-size="11">dBm</text>
<text x="202.6" y="648.7" text-anchor="end">-10</text>
<text x="202.6" y="661.5" text-anchor="end">-20</text>
<text x="202.6" y="674.3" text-anchor="end">-30</text>
<text x="202.6" y="687.1" text-anchor="end">-40</text>
<text x="202.6" y="699.9" text-anchor="end">-50</text>
<text x="202.6" y="712.6" text-anchor="end">-60</text>
<text x="202.6" y="725.4" text-anchor="end">-70</text>
<text x="202.6" y="738.2" text-anchor="end">-80</text>
<text x="202.6" y="751.0" text-anchor="end">-90</text>
<text x="194.2" y="763.2" text-anchor="middle" font-size="9">Channel</text>
</g>

<g class="ar" font-size="7.5" fill="#111" text-anchor="middle">
<text x="13.1" y="762.5">2</text>
<text x="34.3" y="762.5">4</text>
<text x="55.3" y="762.5">5</text>
<text x="64.6" y="762.5">6</text>
<text x="105.7" y="762.5">7</text>
<text x="126.7" y="762.5">9</text>
<text x="147.7" y="762.5">11</text>
<text x="168.3" y="762.5">13</text>
<text x="219.7" y="762.5">14</text>
<text x="241.1" y="762.5">16</text>
<text x="271.9" y="762.5">19</text>
<text x="302.7" y="762.5">22</text>
<text x="333.6" y="762.5">25</text>
<text x="364.4" y="762.5">28</text>
<text x="395.3" y="762.5">31</text>
<text x="426.1" y="762.5">34</text>
<text x="456.9" y="762.5">37</text>
<text x="487.8" y="762.5">40</text>
<text x="518.6" y="762.5">43</text>
<text x="549.5" y="762.5">46</text>
<text x="580.3" y="762.5">49</text>
<text x="611.1" y="762.5">52</text>
<text x="642.0" y="762.5">55</text>
<text x="672.8" y="762.5">58</text>
<text x="703.7" y="762.5">61</text>
<text x="734.5" y="762.5">64</text>
<text x="765.3" y="762.5">67</text>
<text x="786.7" y="762.5">69</text>
</g>

<path d="M7.5 759.8 H9.9 M16.3 759.8 H31.1 M37.5 759.8 H52.1 M58.5 759.8 H61.4 M67.8 759.8 H102.5 M108.9 759.8 H123.5 M129.9 759.8 H142.5 M152.9 759.8 H163.1 M225.1 759.8 H235.7 M246.5 759.8 H266.5 M277.3 759.8 H297.3 M308.1 759.8 H328.2 M339.0 759.8 H359.0 M369.8 759.8 H389.9 M400.7 759.8 H420.7 M431.5 759.8 H451.5 M462.3 759.8 H482.4 M493.2 759.8 H513.2 M524.0 759.8 H544.1 M554.9 759.8 H574.9 M585.7 759.8 H605.7 M616.5 759.8 H636.6 M647.4 759.8 H667.4 M678.2 759.8 H698.3 M709.1 759.8 H729.1 M739.9 759.8 H759.9 M770.7 759.8 H781.3" stroke="#000" stroke-width="1.6" fill="none"/>

<g>
<rect x="60.2" y="644.2" width="9" height="40.4" fill="#fff" fill-opacity="0.8"/>
<rect x="58.3" y="686.0" width="12.8" height="6.4" rx="3.2" fill="#ffee00"/>
<rect x="60.1" y="687.7" width="9.2" height="3" rx="0.8" fill="#7200d6"/>
<text class="dv" font-size="9.7" fill="#7711cc" transform="translate(68.2 683.6) rotate(-90) scale(0.925 1)">KEFM-LP</text>
<rect x="349.0" y="680.9" width="9" height="39.6" fill="#fff" fill-opacity="0.8"/>
<rect x="349.1" y="723.8" width="8.8" height="2.8" rx="0.8" fill="#7200d6" stroke="#4a0096" stroke-width="0.5"/>
<text class="dv" font-size="9.7" fill="#7711cc" transform="translate(357.0 719.6) rotate(-90) scale(0.925 1)">KEXT-CA</text>
<rect x="225.1" y="696.9" width="9" height="27.1" fill="#fff" fill-opacity="0.8"/>
<rect x="225.2" y="727.2" width="8.8" height="2.8" rx="0.8" fill="#b98ae0" stroke="#a87cd6" stroke-width="0.5"/>
<text class="dv" font-size="9.7" fill="#b98ae0" transform="translate(233.1 723.0) rotate(-90) scale(0.925 1)">K15FJ</text>
<rect x="668.9" y="694.2" width="9" height="33.8" fill="#fff" fill-opacity="0.8"/>
<rect x="669.0" y="731.2" width="8.8" height="2.8" rx="0.8" fill="#7200d6" stroke="#4a0096" stroke-width="0.5"/>
<text class="dv" font-size="9.7" fill="#7711cc" transform="translate(676.9 727.0) rotate(-90) scale(0.925 1)">K58AW</text>
<rect x="338.6" y="697.9" width="9" height="30.7" fill="#fff" fill-opacity="0.8"/>
<rect x="338.7" y="731.8" width="8.8" height="2.8" rx="0.8" fill="#b98ae0" stroke="#a87cd6" stroke-width="0.5"/>
<text class="dv" font-size="9.7" fill="#b98ae0" transform="translate(346.6 727.6) rotate(-90) scale(0.925 1)">K26GK</text>
<rect x="9.0" y="699.6" width="9" height="30.7" fill="#fff" fill-opacity="0.8"/>
<rect x="7.1" y="731.7" width="12.8" height="6.4" rx="3.2" fill="#ffee00"/>
<rect x="8.9" y="733.4" width="9.2" height="3" rx="0.8" fill="#7200d6"/>
<text class="dv" font-size="9.7" fill="#7711cc" transform="translate(17.0 729.3) rotate(-90) scale(0.925 1)">K02OA</text>
<rect x="400.6" y="692.8" width="9" height="38.9" fill="#fff" fill-opacity="0.8"/>
<rect x="400.7" y="734.9" width="8.8" height="2.8" rx="0.8" fill="#b98ae0" stroke="#a87cd6" stroke-width="0.5"/>
<text class="dv" font-size="9.7" fill="#b98ae0" transform="translate(408.6 730.7) rotate(-90) scale(0.925 1)">KSTV-LP</text>
<rect x="214.8" y="695.7" width="9" height="38.9" fill="#fff" fill-opacity="0.8"/>
<rect x="214.9" y="737.8" width="8.8" height="2.8" rx="0.8" fill="#b98ae0" stroke="#a87cd6" stroke-width="0.5"/>
<text class="dv" font-size="9.7" fill="#b98ae0" transform="translate(222.8 733.6) rotate(-90) scale(0.925 1)">KAZV-LP</text>
<rect x="214.8" y="695.7" width="9" height="43.0" fill="#fff" fill-opacity="0.8"/>
<rect x="214.9" y="741.9" width="8.8" height="2.8" rx="0.8" fill="#b98ae0" stroke="#a87cd6" stroke-width="0.5"/>
<text class="dv" font-size="9.7" fill="#b98ae0" transform="translate(222.8 737.7) rotate(-90) scale(0.925 1)">KMMK-LP</text>
<rect x="772.1" y="709.5" width="9" height="29.9" fill="#fff" fill-opacity="0.8"/>
<rect x="772.2" y="742.7" width="8.8" height="2.8" rx="0.8" fill="#7200d6" stroke="#4a0096" stroke-width="0.5"/>
<text class="dv" font-size="9.7" fill="#7711cc" transform="translate(780.1 738.5) rotate(-90) scale(0.925 1)">K68AL</text>
</g>

</svg>
</body></html>
